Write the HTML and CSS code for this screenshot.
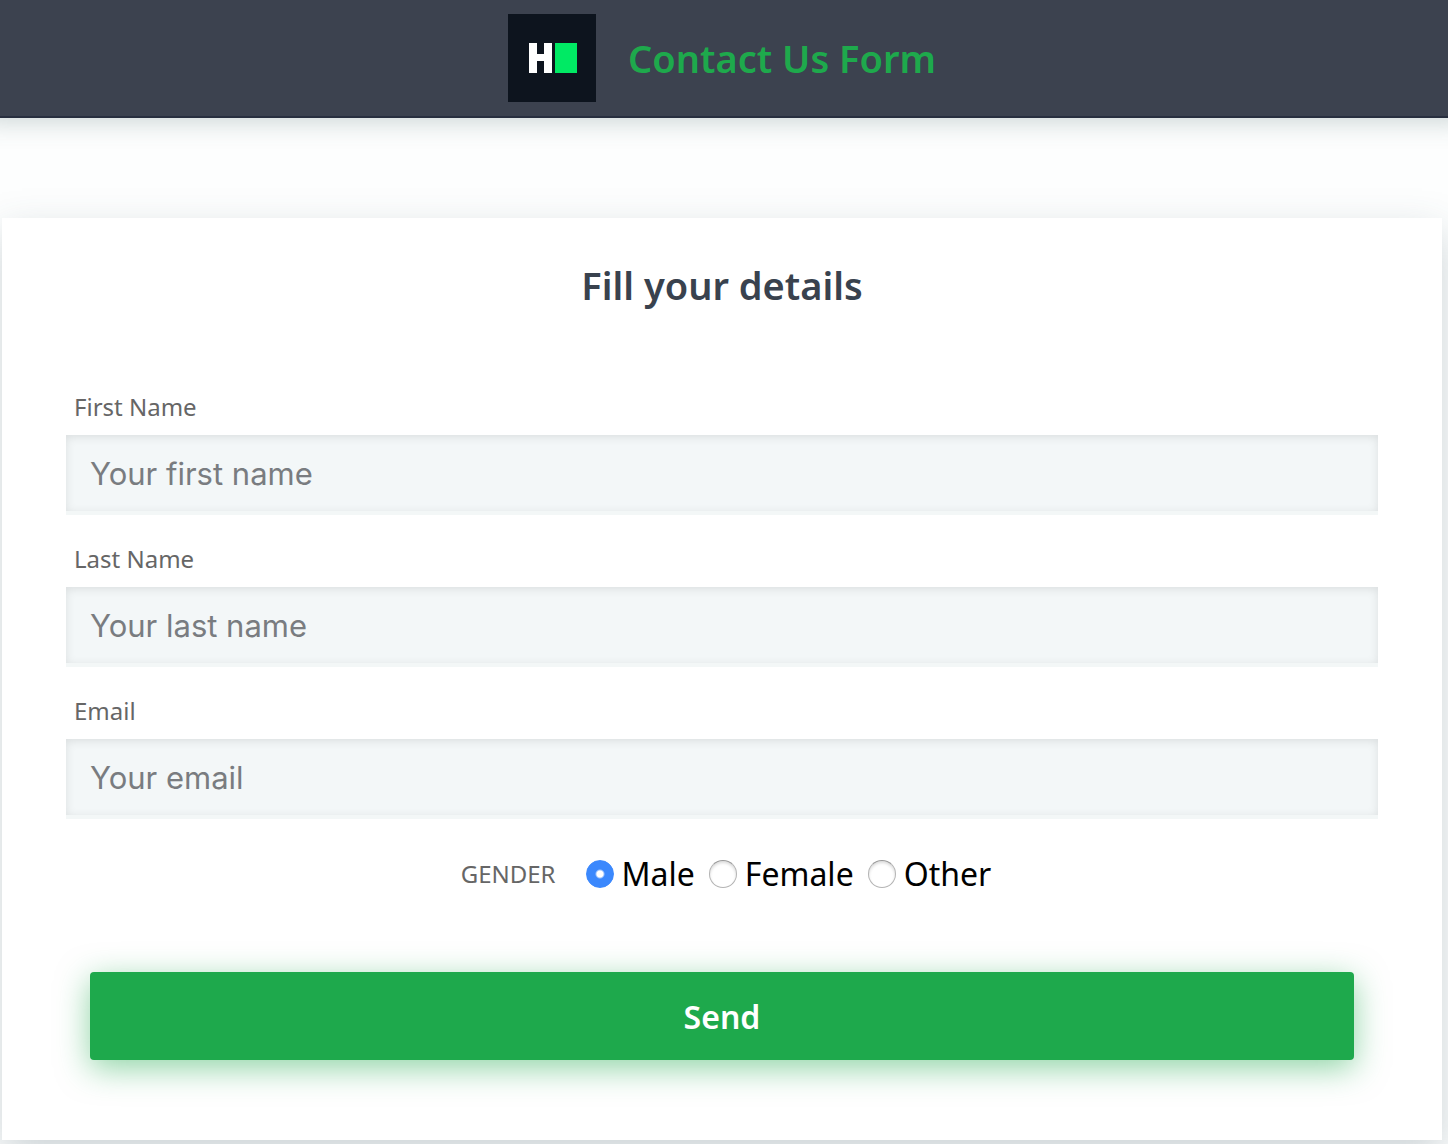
FILE: index.html
```html
<!DOCTYPE html>
<html lang="en">
<head>
<meta charset="utf-8">
<meta name="viewport" content="width=device-width, initial-scale=1">
<title>Contact Us Form</title>
<link rel="stylesheet" href="styles.css">
</head>
<body>
<header class="site-header">
  <svg class="logo" viewBox="0 0 88 88" role="img" aria-label="Logo">
    <rect width="88" height="88" fill="#0d141e"/>
    <path d="M21 29h8v11h7V29h8v30h-8V47h-7v12h-8z" fill="#fff"/>
    <rect x="47" y="29" width="22" height="30" fill="#00ea64"/>
  </svg>
  <h1 class="site-title">Contact Us Form</h1>
</header>
<main class="page">
  <form class="card">
    <h2 class="card-title">Fill your details</h2>
    <div class="fields">
      <div class="field">
        <label class="field-label" for="first-name">First Name</label>
        <input class="field-input" id="first-name" type="text" placeholder="Your first name">
      </div>
      <div class="field">
        <label class="field-label" for="last-name">Last Name</label>
        <input class="field-input" id="last-name" type="text" placeholder="Your last name">
      </div>
      <div class="field">
        <label class="field-label" for="email">Email</label>
        <input class="field-input" id="email" type="email" placeholder="Your email">
      </div>
    </div>
    <div class="gender" role="radiogroup" aria-labelledby="gender-label">
      <span class="gender-label" id="gender-label">GENDER</span>
      <label class="option"><input class="radio" type="radio" name="gender" value="male" checked>Male</label>
      <label class="option"><input class="radio" type="radio" name="gender" value="female">Female</label>
      <label class="option"><input class="radio" type="radio" name="gender" value="other">Other</label>
    </div>
    <button class="send" type="submit">Send</button>
  </form>
</main>
</body>
</html>
```
FILE: styles.css
```css
* {
  box-sizing: border-box;
}

body {
  margin: 0;
  background: #fdfefe;
  font-family: "Noto Sans", "Open Sans", sans-serif;
}

.site-header {
  display: flex;
  align-items: center;
  justify-content: center;
  gap: 32px;
  padding: 14px 4px 14px 0;
  background: #3c424f;
  border-bottom: 2px solid #282f3f;
  box-shadow: 0 -14px 24px 18px rgba(60, 95, 95, 0.25);
}

.logo {
  width: 88px;
  height: 88px;
}

.site-title {
  margin: 0;
  color: #1ea94c;
  font-size: 38px;
  font-weight: 600;
  line-height: 56px;
}

.page {
  padding: 100px 6px 4px 2px;
}

.card {
  display: flex;
  flex-direction: column;
  padding: 40px 64px 80px;
  background: #fff;
  box-shadow: 0 16px 40px rgba(60, 85, 95, 0.25);
}

.card-title {
  margin: 0 0 79px;
  color: #39424e;
  font-size: 38px;
  font-weight: 600;
  line-height: 54px;
  text-align: center;
}

.fields {
  display: flex;
  flex-direction: column;
  gap: 28px;
}

.field {
  display: flex;
  flex-direction: column;
  gap: 12px;
}

.field-label {
  padding-left: 8px;
  color: #666;
  font-size: 24px;
  line-height: 32px;
}

.field-input {
  width: 100%;
  height: 80px;
  padding: 0 24px;
  border: 0;
  border-bottom: 4px solid #f3f7f7;
  border-radius: 0;
  background: #f3f7f8;
  box-shadow: inset 0 2px 10px rgba(0, 0, 0, 0.1);
  color: #39424e;
  font-family: Inter, sans-serif;
  font-size: 31px;
}

.field-input::placeholder {
  color: #797c80;
  opacity: 1;
}

.gender {
  display: flex;
  align-items: center;
  justify-content: center;
  gap: 14px;
  margin: 31px 0 74px;
  padding-left: 8px;
  line-height: 48px;
}

.gender-label {
  margin-right: 16px;
  color: #666;
  font-size: 24px;
}

.option {
  display: flex;
  align-items: center;
  gap: 8px;
  color: #000;
  font-size: 32px;
}

.radio {
  appearance: none;
  width: 28px;
  height: 28px;
  margin: 0;
  border: 1px solid #b4b4b4;
  border-top-color: #999;
  border-radius: 50%;
  background: #fff;
  box-shadow: inset 0 2px 3px rgba(0, 0, 0, 0.14);
}

.radio:checked {
  border-color: #3b88fd;
  background: radial-gradient(circle, #fff 3px, #3b88fd 5px);
  box-shadow: none;
}

.send {
  height: 88px;
  margin: 0 24px;
  border: 0;
  border-radius: 4px;
  background: #1ea94c;
  box-shadow: 0 8px 32px rgba(30, 169, 76, 0.5);
  color: #fff;
  font-family: inherit;
  font-size: 32px;
  font-weight: 600;
}
```
